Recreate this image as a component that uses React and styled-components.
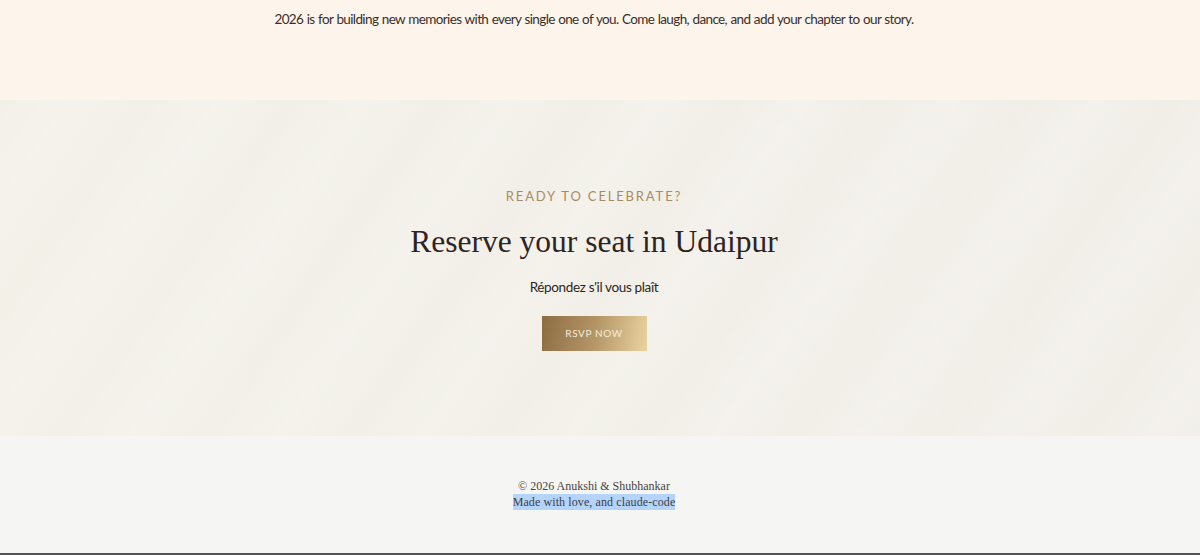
import React from "react";
import styled, { createGlobalStyle } from "styled-components";

const Global = createGlobalStyle`
  html, body { margin: 0; padding: 0; }
  body { background: #f5f5f3; font-family: Lato, "Noto Sans", sans-serif; }
`;

const Page = styled.div`
  width: 100%;
  height: 555px;
  display: flex;
  flex-direction: column;
  overflow: hidden;
  border-bottom: 2px solid #555;
  box-sizing: border-box;
`;

const Section = styled.section`
  box-sizing: border-box;
  padding-right: 12px;
  display: flex;
  flex-direction: column;
  align-items: center;
`;

const Intro = styled(Section)`
  height: 100px;
  background: #fdf4ec;
  padding-top: 9px;
`;

const IntroText = styled.p`
  margin: 0;
  font-family: Lato, sans-serif;
  font-size: 13.5px;
  letter-spacing: -0.62px;
  word-spacing: 0.6px;
  line-height: 20px;
  color: #3a2f29;
`;

const Celebrate = styled(Section)`
  height: 336px;
  background:
    repeating-linear-gradient(125deg, rgba(255,255,255,0) 0px, rgba(255,255,255,0.18) 60px, rgba(255,255,255,0) 120px),
    linear-gradient(90deg, #f3f0e8 0%, #f1eee8 100%);
  justify-content: center;
`;

const Eyebrow = styled.div`
  font-family: Lato, sans-serif;
  font-size: 13px;
  line-height: 20px;
  letter-spacing: 1.85px;
  color: #a88b62;
  text-transform: uppercase;
`;

const Heading = styled.h2`
  margin: 17px 0 0;
  font-family: "Liberation Serif", "DejaVu Serif", serif;
  font-weight: 400;
  font-size: 31.5px;
  line-height: 38px;
  color: #2e241f;
`;

const Sub = styled.p`
  margin: 16px 0 0;
  font-family: Lato, sans-serif;
  font-size: 13.5px;
  letter-spacing: -0.35px;
  line-height: 20px;
  color: #2e2520;
`;

const Button = styled.button`
  margin-top: 19px;
  width: 105px;
  height: 35px;
  border: none;
  padding: 0;
  background: linear-gradient(100deg, #8d6c43 0%, #b49566 50%, #ead39f 100%);
  color: #f6ecdb;
  font-family: Lato, sans-serif;
  font-size: 10px;
  letter-spacing: 0.6px;
  text-transform: uppercase;
  cursor: pointer;
`;

const Footer = styled(Section)`
  flex: 1;
  background: #f5f5f3;
  justify-content: center;
  padding-bottom: 1px;
`;

const FooterLine = styled.div`
  font-family: "Liberation Serif", "DejaVu Serif", serif;
  font-size: 12px;
  line-height: 16px;
  letter-spacing: ${(p) => (p.$highlight ? "0.1px" : "0px")};
  color: ${(p) => (p.$highlight ? "#3a3f4a" : "#4a4440")};
  background: ${(p) => (p.$highlight ? "#b5d4fb" : "transparent")};
`;

export default function App() {
  return (
    <>
      <Global />
      <Page>
        <Intro>
          <IntroText>
            2026 is for building new memories with every single one of you. Come laugh, dance, and add your chapter to our story.
          </IntroText>
        </Intro>
        <Celebrate>
          <Eyebrow>Ready to celebrate?</Eyebrow>
          <Heading>Reserve your seat in Udaipur</Heading>
          <Sub>Répondez s'il vous plaît</Sub>
          <Button>RSVP Now</Button>
        </Celebrate>
        <Footer>
          <FooterLine>© 2026 Anukshi &amp; Shubhankar</FooterLine>
          <FooterLine $highlight>Made with love, and claude-code</FooterLine>
        </Footer>
      </Page>
    </>
  );
}
